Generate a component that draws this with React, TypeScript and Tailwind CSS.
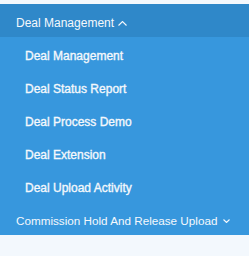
const items = [
  'Deal Management',
  'Deal Status Report',
  'Deal Process Demo',
  'Deal Extension',
  'Deal Upload Activity',
];

function Caret({ up, w, h }: { up?: boolean; w: number; h: number }) {
  return (
    <svg width={w} height={h} viewBox={`0 0 ${w} ${h}`} fill="none" stroke="currentColor" strokeWidth={1.1} className="shrink-0">
      {up ? (
        <polyline points={`0.5,${h - 0.5} ${w / 2},0.5 ${w - 0.5},${h - 0.5}`} />
      ) : (
        <polyline points={`0.5,0.5 ${w / 2},${h - 0.5} ${w - 0.5},0.5`} />
      )}
    </svg>
  );
}

export default function App() {
  return (
    <div className="w-[249px] h-[256px] bg-[#f3f8fd] pt-[4px] text-[12px] text-[#f4f8fc] font-['Liberation_Sans',Arial,sans-serif]">
      <div className="bg-[#2f88c9] h-[33px] flex items-center pt-[5px] pl-[16px] gap-[4px]">
        <span>Deal Management</span>
        <Caret up w={9} h={5} />
      </div>
      <div className="bg-[#3797dd]">
        {items.map(item => (
          <div key={item} className="h-[33px] flex items-center pt-[5px] pl-[25px] [-webkit-text-stroke:0.35px_#f4f8fc]">
            {item}
          </div>
        ))}
        <div className="h-[33px] flex items-center pt-[5px] pl-[16px] gap-[6px] whitespace-nowrap text-[11.7px]">
          <span>Commission Hold And Release Upload</span>
          <Caret w={7} h={4} />
        </div>
      </div>
    </div>
  );
}
